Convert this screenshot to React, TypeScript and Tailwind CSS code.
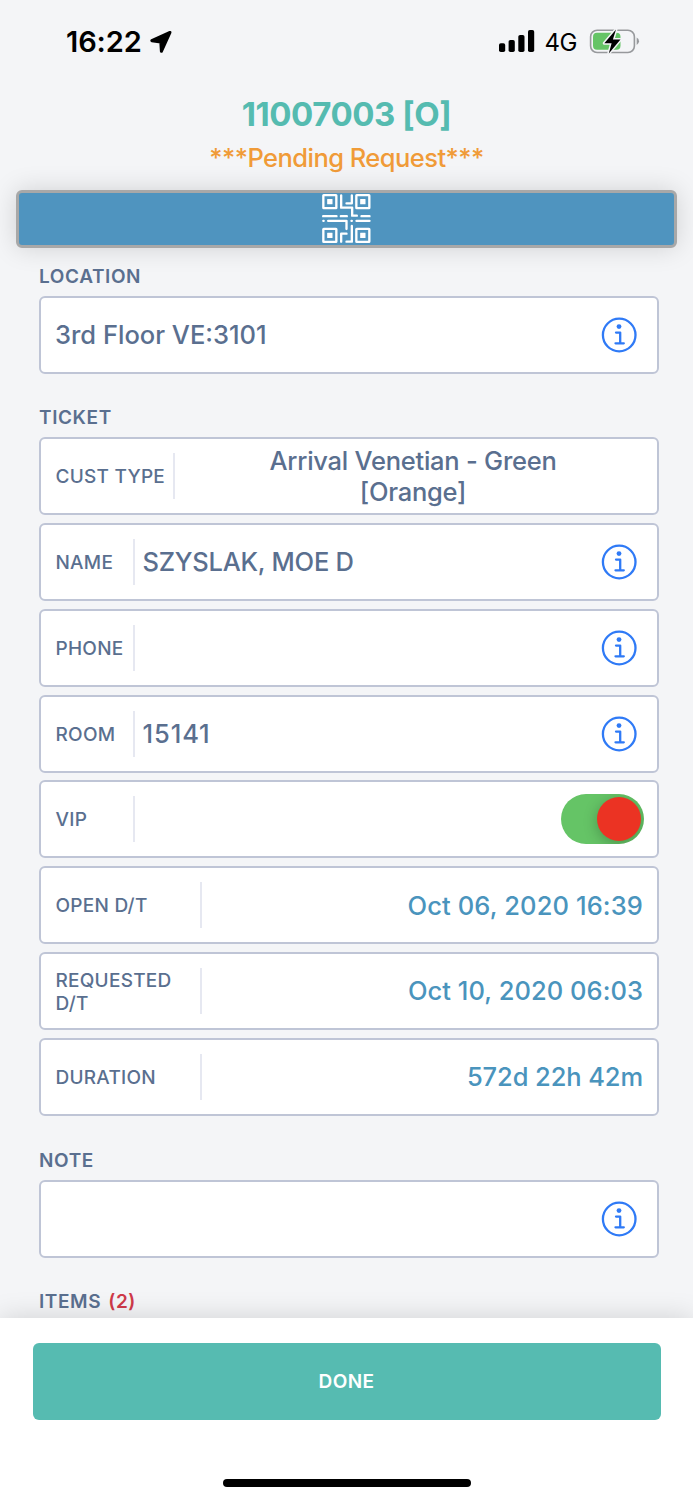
import type { ReactNode } from "react";

function InfoIcon() {
  return (
    <svg width="36" height="36" viewBox="0 0 36 36" fill="none" stroke="#2f7af6" className="mr-[20px] shrink-0">
      <circle cx="18.2" cy="18" r="16.3" strokeWidth="2.3" />
      <circle cx="18" cy="9.6" r="2.4" fill="#2f7af6" stroke="none" />
      <path d="M15 15.600h4.200v10.600M14.500 26.300h8.300" strokeWidth="2.300" strokeLinecap="round" strokeLinejoin="round" />
    </svg>
  );
}

function QrIcon() {
  const corners = [
    [66, 43],
    [165, 43],
    [66, 144],
    [165, 144],
  ];
  return (
    <svg width="49" height="49" viewBox="65.5 43 147 147" fill="none" stroke="#fff" strokeWidth="7" className="mt-[-1px]">
      {corners.map(([x, y]) => (
        <g key={`${x}-${y}`}>
          <rect x={x + 3.5} y={y + 3.5} width="39" height="39" rx="1" />
          <rect x={x + 15} y={y + 15} width="16" height="16" rx="1" fill="#fff" stroke="none" />
        </g>
      ))}
      <g strokeLinecap="round" strokeLinejoin="round">
        <path d="M123 47V84H156V108H170" />
        <path d="M155 47V71H139" />
        <path d="M69 109.500H109M122 109.500H140M184 109.500H208" />
        <path d="M69.500 123.500H70.500M84 123.500H139V148M154 123.500H155M169 123.500H208" />
        <path d="M155 139V186H139M123 186V162H139" />
      </g>
    </svg>
  );
}

function StatusBar() {
  return (
    <div className="flex h-[84px] shrink-0 items-center justify-between pl-[66px] pr-[53px] text-black">
      <div className="flex items-center gap-[7px]">
        <span className="mt-[-2px] text-[29px] font-semibold leading-none tracking-[-0.100px]">16:22</span>
        <svg width="24" height="24" viewBox="0 0 24 24" className="mt-[-1px]">
          <path d="M21 2.400 2.800 10.700 11.800 12 12.400 21.300Z" fill="#000" stroke="#000" strokeWidth="3" strokeLinejoin="round" />
        </svg>
      </div>
      <div className="flex items-center">
        <svg width="36" height="24" viewBox="0 0 36 24" className="mt-[-2px]">
          <rect x="0" y="14.200" width="6.200" height="8.800" rx="1.800" />
          <rect x="9.600" y="11" width="6.200" height="12" rx="1.800" />
          <rect x="19.300" y="6" width="6.200" height="17" rx="1.800" />
          <rect x="29" y="1" width="6.200" height="22" rx="1.800" />
        </svg>
        <span className="ml-[10px] mt-[1px] text-[24px] leading-none tracking-[-0.500px]">4G</span>
        <svg width="51" height="28" viewBox="0 0 51 28" className="ml-[12px] mt-[-1px]">
          <rect x="1.600" y="2.200" width="43.800" height="22.300" rx="6.500" fill="none" stroke="#97999c" strokeWidth="1.600" />
          <path d="M47.700 9.500a4.200 4.200 0 0 1 0 7.500Z" fill="#97999c" />
          <rect x="4" y="4.800" width="27.500" height="17" rx="4" fill="#65c466" />
          <path d="M27 1.500 15.300 15.300h7.300L19.800 25.400 31.500 11.600h-7.600Z" fill="#000" stroke="#f4f5f7" strokeWidth="3" strokeLinejoin="round" paintOrder="stroke" />
        </svg>
      </div>
    </div>
  );
}

function SectionTitle({ children }: { children: ReactNode }) {
  return <h2 className="flex h-[40px] shrink-0 items-center pt-[1px] text-[19px] font-semibold leading-none tracking-[0.600px]">{children}</h2>;
}

function Field({ label, labelClass = "w-[79px]", children }: { label?: string; labelClass?: string; children?: ReactNode }) {
  return (
    <div className="flex h-[78px] shrink-0 items-center rounded-[6px] border-2 border-[#bfc5d6] bg-white">
      {label && (
        <div className={`ml-[14.500px] flex h-[46px] shrink-0 items-center border-r-2 border-[#e6e8f1] pt-px text-[19px] font-medium leading-[23px] tracking-[0.250px] ${labelClass}`}>
          {label}
        </div>
      )}
      {children}
    </div>
  );
}

function DateValue({ children, spacing }: { children: ReactNode; spacing: string }) {
  return <span className={`ml-auto mr-[14px] text-[25.500px] font-medium leading-none text-[#4a94bd] ${spacing}`}>{children}</span>;
}

export default function App() {
  return (
    <div className="flex h-[1500px] w-[693px] flex-col overflow-hidden bg-[#f4f5f7] font-['Inter',sans-serif] text-[#5a6f8f]">
      <StatusBar />
      <header className="flex flex-col items-center">
        <h1 className="mt-[10px] text-[33px] font-bold leading-[40px] tracking-[-0.450px] text-[#55bbb0]">11007003 [O]</h1>
        <p className="mt-[8px] text-[25.500px] font-medium leading-[32px] tracking-[-0.550px] text-[#f09b38]">***Pending Request***</p>
      </header>
      <button className="mx-[16px] mt-[16px] flex h-[58px] shrink-0 items-center justify-center rounded-[6px] border-[3.500px] border-[#a8a8a8] bg-[#4f94bf] shadow-[0_0_26px_rgba(0,0,0,0.15)]">
        <QrIcon />
      </button>

      <main className="flex min-h-0 grow flex-col pl-[39px] pr-[34px] pt-[7.500px]">
        <SectionTitle>LOCATION</SectionTitle>
        <Field>
          <span className="ml-[14px] mr-auto text-[25.500px] font-medium leading-none">3rd Floor VE:3101</span>
          <InfoIcon />
        </Field>

        <div className="mt-[23.500px] shrink-0">
          <SectionTitle>TICKET</SectionTitle>
        </div>
        <div className="flex shrink-0 flex-col gap-[7.860px]">
          <Field label="CUST TYPE" labelClass="w-[119.500px]">
            <p className="grow pr-[6px] text-center text-[25.500px] font-medium leading-[31px] tracking-[-0.250px]">
              Arrival Venetian - Green
              <br />
              [Orange]
            </p>
          </Field>
          <Field label="NAME">
            <span className="ml-[8px] mr-auto text-[25.500px] font-medium leading-none tracking-[-0.250px]">SZYSLAK, MOE D</span>
            <InfoIcon />
          </Field>
          <Field label="PHONE">
            <span className="grow" />
            <InfoIcon />
          </Field>
          <Field label="ROOM">
            <span className="ml-[8px] mr-auto text-[25.500px] font-medium leading-none tracking-[0.900px]">15141</span>
            <InfoIcon />
          </Field>
          <Field label="VIP">
            <div className="ml-auto mr-[13px] flex h-[50px] w-[83px] items-center justify-end overflow-hidden rounded-full bg-[#65c466] pr-[3px]">
              <div className="size-[44px] rounded-full bg-[#eb3323] shadow-[0_3px_14px_rgba(0,0,0,0.25)]" />
            </div>
          </Field>
          <Field label="OPEN D/T" labelClass="w-[146.500px]">
            <DateValue spacing="tracking-[0.120px]">Oct 06, 2020 16:39</DateValue>
          </Field>
          <Field label="REQUESTED D/T" labelClass="w-[146.500px]">
            <DateValue spacing="tracking-[0.050px]">Oct 10, 2020 06:03</DateValue>
          </Field>
          <Field label="DURATION" labelClass="w-[146.500px]">
            <DateValue spacing="tracking-[-0.100px]">572d 22h 42m</DateValue>
          </Field>
        </div>

        <div className="mt-[23.500px] shrink-0">
          <SectionTitle>NOTE</SectionTitle>
        </div>
        <Field>
          <span className="grow" />
          <InfoIcon />
        </Field>

        <div className="mt-[23.500px] shrink-0">
          <SectionTitle>
            ITEMS<span className="ml-[7px] text-[#cf3a4a]">(2)</span>
          </SectionTitle>
        </div>
      </main>

      <footer className="relative flex h-[182px] shrink-0 flex-col items-center bg-white pt-[25px] shadow-[0_0_26px_rgba(0,0,0,0.15)]">
        <button className="h-[77px] w-[628px] rounded-[6px] bg-[#56bbb1] pt-[2px] text-[19px] font-semibold tracking-[0.400px] text-white">DONE</button>
        <div className="mt-[59px] h-[8px] w-[248px] rounded-full bg-black" />
      </footer>
    </div>
  );
}
